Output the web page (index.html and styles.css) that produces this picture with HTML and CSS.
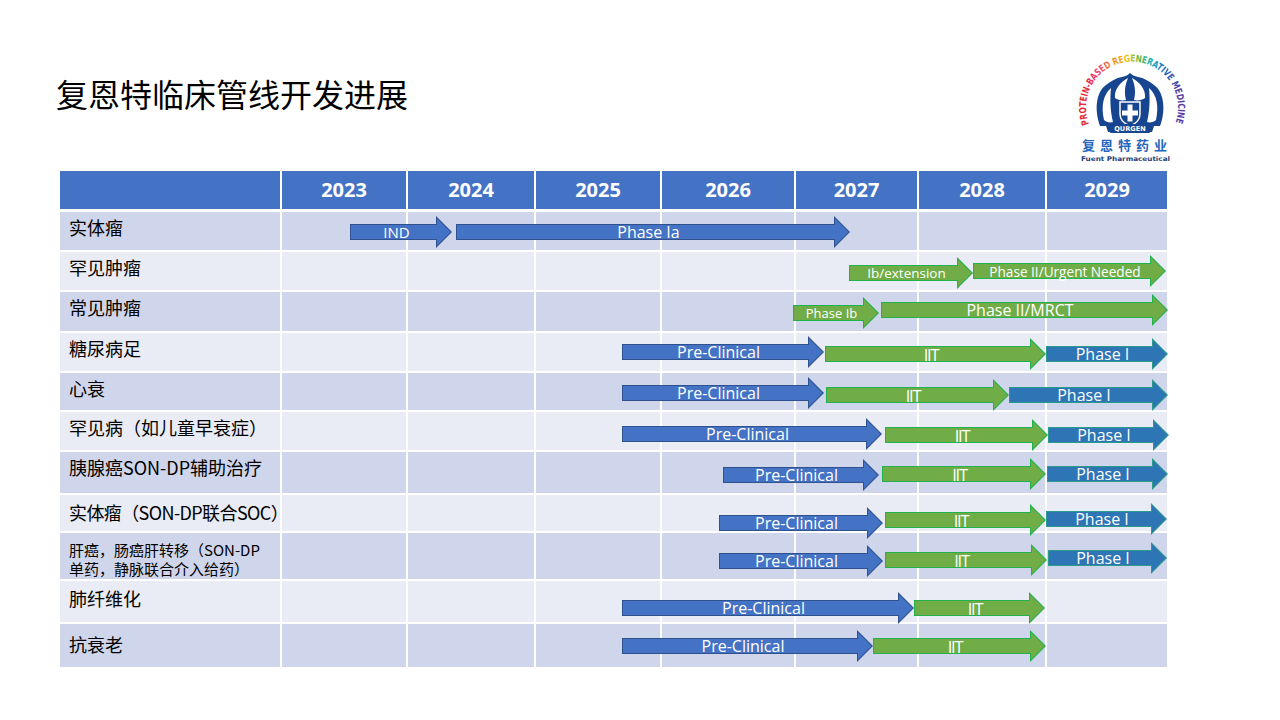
FILE: index.html
```html
<!DOCTYPE html>
<html lang="zh-CN">
<head>
<meta charset="utf-8">
<title>复恩特临床管线开发进展</title>
<link rel="stylesheet" href="styles.css">
</head>
<body>
<div class="slide">
  <div class="top">
    <h1 class="title">复恩特临床管线开发进展</h1>
    <svg class="logo" width="120" height="130" viewBox="0 0 120 130" aria-label="复恩特药业 Fuent Pharmaceutical">
      <defs>
        <linearGradient id="rb" gradientUnits="userSpaceOnUse" x1="14" y1="0" x2="110" y2="0">
          <stop offset="0" stop-color="#e3262e"/>
          <stop offset="0.14" stop-color="#e8407f"/>
          <stop offset="0.3" stop-color="#f08a24"/>
          <stop offset="0.45" stop-color="#efc21a"/>
          <stop offset="0.58" stop-color="#5cb946"/>
          <stop offset="0.72" stop-color="#1aa9c9"/>
          <stop offset="0.86" stop-color="#2361b8"/>
          <stop offset="1" stop-color="#5b3a9e"/>
        </linearGradient>
        <path id="arc" d="M19,84 A46,46 0 1,1 105,84"/>
      </defs>
      <text class="arc-text" fill="url(#rb)"><textPath href="#arc" textLength="176" lengthAdjust="spacingAndGlyphs">PROTEIN-BASED REGENERATIVE MEDICINE</textPath></text>
      <path fill="#17458f" d="M30,86 C24,70 26,52 36,45 C41,41 46,38 52,37 C56,36 58,35 60,33 C62,35 64,36 68,37 C74,38 79,41 84,45 C94,52 96,70 90,86 L84,86 L82,92 L38,92 L36,86 Z"/>
      <path fill="#fff" d="M34,80 C31,66 33,55 41,48 C40,58 40,70 43,82 C40,83 36,82 34,80 Z"/>
      <path fill="#fff" d="M86,80 C89,66 87,55 79,48 C80,58 80,70 77,82 C80,83 84,82 86,80 Z"/>
      <path fill="#fff" d="M45,58 C44,50 50,42 58,38 C55,45 54,52 56,60 C52,61 48,60 45,58 Z"/>
      <path fill="#fff" d="M75,58 C76,50 70,42 62,38 C65,45 66,52 64,60 C68,61 72,60 75,58 Z"/>
      <path fill="#17458f" stroke="#fff" stroke-width="1.5" d="M50,62 L70,62 L70,74 C70,80 65,84 60,86 C55,84 50,80 50,74 Z"/>
      <rect x="57.5" y="64.5" width="5" height="17" fill="#fff"/>
      <rect x="52" y="70.5" width="16" height="5" fill="#fff"/>
      <rect x="40" y="84" width="40" height="9" rx="1" fill="#17458f"/>
      <text class="qurgen" x="60" y="91.3" text-anchor="middle">QURGEN</text>
      <text class="cn-name" x="57" y="110" text-anchor="middle">复恩特药业</text>
      <text class="en-name" x="11" y="121" textLength="89" lengthAdjust="spacingAndGlyphs">Fuent Pharmaceutical</text>
    </svg>
  </div>

  <div class="table">
    <div class="row head">
      <div class="cell"></div>
      <div class="cell">2023</div>
      <div class="cell">2024</div>
      <div class="cell">2025</div>
      <div class="cell">2026</div>
      <div class="cell">2027</div>
      <div class="cell">2028</div>
      <div class="cell">2029</div>
    </div>

    <div class="row dark r1">
      <div class="cell label">实体瘤</div>
      <div class="cell"></div><div class="cell"></div><div class="cell"></div><div class="cell"></div><div class="cell"></div><div class="cell"></div><div class="cell"></div>
      <div class="arrow blue fs15" style="left:290px;top:4px;width:102px"><span>IND</span></div>
      <div class="arrow blue fs16" style="left:396px;top:4px;width:394px"><span>Phase Ia</span></div>
    </div>

    <div class="row light r2">
      <div class="cell label">罕见肿瘤</div>
      <div class="cell"></div><div class="cell"></div><div class="cell"></div><div class="cell"></div><div class="cell"></div><div class="cell"></div><div class="cell"></div>
      <div class="arrow green fs14" style="left:789px;top:5px;width:124px"><span>Ib/extension</span></div>
      <div class="arrow green fs135" style="left:913px;top:3px;width:193px"><span>Phase II/Urgent Needed</span></div>
    </div>

    <div class="row dark r3">
      <div class="cell label">常见肿瘤</div>
      <div class="cell"></div><div class="cell"></div><div class="cell"></div><div class="cell"></div><div class="cell"></div><div class="cell"></div><div class="cell"></div>
      <div class="arrow green fs13" style="left:733px;top:5px;width:86px"><span>Phase Ib</span></div>
      <div class="arrow green fs16" style="left:821px;top:2px;width:287px"><span>Phase II/MRCT</span></div>
    </div>

    <div class="row light r4">
      <div class="cell label">糖尿病足</div>
      <div class="cell"></div><div class="cell"></div><div class="cell"></div><div class="cell"></div><div class="cell"></div><div class="cell"></div><div class="cell"></div>
      <div class="arrow blue fs16" style="left:562px;top:3px;width:202px"><span>Pre-Clinical</span></div>
      <div class="arrow green iit" style="left:765px;top:5px;width:221px"><span>IIT</span></div>
      <div class="arrow steel fs16" style="left:986px;top:5px;width:122px"><span>Phase I</span></div>
    </div>

    <div class="row dark r5">
      <div class="cell label">心衰</div>
      <div class="cell"></div><div class="cell"></div><div class="cell"></div><div class="cell"></div><div class="cell"></div><div class="cell"></div><div class="cell"></div>
      <div class="arrow blue fs16" style="left:562px;top:4px;width:202px"><span>Pre-Clinical</span></div>
      <div class="arrow green iit" style="left:766px;top:6px;width:183px"><span>IIT</span></div>
      <div class="arrow steel fs16" style="left:949px;top:6px;width:159px"><span>Phase I</span></div>
    </div>

    <div class="row light r6">
      <div class="cell label">罕见病（如儿童早衰症）</div>
      <div class="cell"></div><div class="cell"></div><div class="cell"></div><div class="cell"></div><div class="cell"></div><div class="cell"></div><div class="cell"></div>
      <div class="arrow blue fs16" style="left:562px;top:6px;width:260px"><span>Pre-Clinical</span></div>
      <div class="arrow green iit" style="left:825px;top:7px;width:163px"><span>IIT</span></div>
      <div class="arrow steel fs16" style="left:988px;top:7px;width:121px"><span>Phase I</span></div>
    </div>

    <div class="row dark r7">
      <div class="cell label">胰腺癌SON-DP辅助治疗</div>
      <div class="cell"></div><div class="cell"></div><div class="cell"></div><div class="cell"></div><div class="cell"></div><div class="cell"></div><div class="cell"></div>
      <div class="arrow blue fs16" style="left:663px;top:7px;width:156px"><span>Pre-Clinical</span></div>
      <div class="arrow green iit" style="left:822px;top:6px;width:164px"><span>IIT</span></div>
      <div class="arrow steel fs16" style="left:987px;top:6px;width:121px"><span>Phase I</span></div>
    </div>

    <div class="row light r8">
      <div class="cell label">实体瘤（SON-DP联合SOC）</div>
      <div class="cell"></div><div class="cell"></div><div class="cell"></div><div class="cell"></div><div class="cell"></div><div class="cell"></div><div class="cell"></div>
      <div class="arrow blue fs16" style="left:659px;top:12px;width:164px"><span>Pre-Clinical</span></div>
      <div class="arrow green iit" style="left:825px;top:9px;width:161px"><span>IIT</span></div>
      <div class="arrow steel fs16" style="left:986px;top:8px;width:121px"><span>Phase I</span></div>
    </div>

    <div class="row dark r9">
      <div class="cell label small">肝癌，肠癌肝转移（SON-DP<br>单药，静脉联合介入给药）</div>
      <div class="cell"></div><div class="cell"></div><div class="cell"></div><div class="cell"></div><div class="cell"></div><div class="cell"></div><div class="cell"></div>
      <div class="arrow blue fs16" style="left:659px;top:12px;width:164px"><span>Pre-Clinical</span></div>
      <div class="arrow green iit" style="left:825px;top:11px;width:162px"><span>IIT</span></div>
      <div class="arrow steel fs16" style="left:988px;top:9px;width:119px"><span>Phase I</span></div>
    </div>

    <div class="row light r10">
      <div class="cell label">肺纤维化</div>
      <div class="cell"></div><div class="cell"></div><div class="cell"></div><div class="cell"></div><div class="cell"></div><div class="cell"></div><div class="cell"></div>
      <div class="arrow blue fs16" style="left:562px;top:11px;width:292px"><span>Pre-Clinical</span></div>
      <div class="arrow green iit" style="left:854px;top:11px;width:131px"><span>IIT</span></div>
    </div>

    <div class="row dark r11">
      <div class="cell label">抗衰老</div>
      <div class="cell"></div><div class="cell"></div><div class="cell"></div><div class="cell"></div><div class="cell"></div><div class="cell"></div><div class="cell"></div>
      <div class="arrow blue fs16" style="left:562px;top:6px;width:251px"><span>Pre-Clinical</span></div>
      <div class="arrow green iit" style="left:813px;top:6px;width:173px"><span>IIT</span></div>
    </div>
  </div>
</div>
</body>
</html>
```

FILE: styles.css
```css
* { box-sizing: border-box; }

body {
  margin: 0;
  background: #ffffff;
}

.slide {
  width: 1280px;
  height: 720px;
  overflow: hidden;
  background: #ffffff;
}

/* ---------- top: title + logo ---------- */
.top {
  display: flex;
  justify-content: space-between;
  align-items: flex-start;
  height: 171px;
}

.title {
  margin: 74px 0 0 56px;
  font: 400 32px/38px "Noto Sans CJK SC", sans-serif;
  color: #000000;
}

.logo {
  display: block;
  margin: 40px 90px 0 0;
}

.arc-text {
  font-family: "DejaVu Sans Condensed", "DejaVu Sans", sans-serif;
  font-weight: 700;
  font-size: 9.6px;
}

.qurgen {
  font-family: "DejaVu Sans", sans-serif;
  font-weight: 700;
  font-size: 6.6px;
  fill: #ffffff;
}

.cn-name {
  font-family: "Noto Sans CJK SC", sans-serif;
  font-weight: 700;
  font-size: 13px;
  letter-spacing: 5px;
  fill: #2466bd;
}

.en-name {
  font-family: "DejaVu Sans", sans-serif;
  font-weight: 700;
  font-size: 6.4px;
  fill: #1f3f7a;
}

/* ---------- table ---------- */
.table {
  margin-left: 60px;
  width: 1107px;
  display: flex;
  flex-direction: column;
  gap: 2px;
}

.row {
  position: relative;
  display: grid;
  grid-template-columns: 220px 124px 126px 124px 132px 121px 126px 120px;
  column-gap: 2px;
}

.row.head { height: 38px; margin-bottom: 1px; }
.r1 { height: 38px; }
.r2 { height: 38px; }
.r3 { height: 39px; }
.r4 { height: 38px; }
.r5 { height: 37px; }
.r6 { height: 38px; }
.r7 { height: 41px; }
.r8 { height: 36px; }
.r9 { height: 46px; }
.r10 { height: 41px; }
.r11 { height: 43px; }

.head .cell {
  background: #4472c4;
  color: #ffffff;
  font: 700 20px/38px "Open Sans", sans-serif;
  text-align: center;
}

.dark .cell { background: #cfd5ea; }
.light .cell { background: #e9ebf5; }

.label {
  font: 400 18px/24px "Noto Sans CJK SC", sans-serif;
  color: #000000;
  padding: 3px 0 0 9px;
  white-space: nowrap;
}

.r8 .label { padding-top: 5px; letter-spacing: -0.6px; }
.r10 .label { padding-top: 5px; }
.r11 .label { padding-top: 8px; }

.label.small {
  font-size: 15px;
  line-height: 19px;
  padding-top: 7px;
}

/* ---------- arrows (block arrows on the timeline) ---------- */
.arrow {
  position: absolute;
  height: 32px;
  --t: 8px;
  --l: 16px;
  z-index: 1;
}

.arrow::before,
.arrow::after {
  content: "";
  position: absolute;
  inset: 0;
}

.arrow::before {
  background: var(--edge);
  clip-path: polygon(
    0 var(--t),
    calc(100% - var(--l)) var(--t),
    calc(100% - var(--l)) 0,
    100% 50%,
    calc(100% - var(--l)) 100%,
    calc(100% - var(--l)) calc(100% - var(--t)),
    0 calc(100% - var(--t))
  );
}

.arrow::after {
  background: var(--fill);
  clip-path: polygon(
    1px calc(var(--t) + 1px),
    calc(100% - var(--l) + 1px) calc(var(--t) + 1px),
    calc(100% - var(--l) + 1px) 2.4px,
    calc(100% - 1.5px) 50%,
    calc(100% - var(--l) + 1px) calc(100% - 2.4px),
    calc(100% - var(--l) + 1px) calc(100% - var(--t) - 1px),
    1px calc(100% - var(--t) - 1px)
  );
}

.arrow span {
  position: relative;
  z-index: 2;
  display: flex;
  align-items: center;
  justify-content: center;
  height: 32px;
  padding-right: 9px;
  color: #ffffff;
  font-family: "Open Sans", sans-serif;
  white-space: nowrap;
}

.blue { --fill: #4472c4; --edge: #2f528f; }
.green { --fill: #70ad47; --edge: #22b14c; }
.steel { --fill: #2e75b6; --edge: #2a9a8c; }

.fs13 span { font-size: 13px; }
.fs135 span { font-size: 13.6px; }
.fs14 span { font-size: 13.5px; }
.fs15 span { font-size: 15px; }
.fs16 span { font-size: 16px; }
.iit span { font-size: 16.5px; letter-spacing: -1.2px; }
```
